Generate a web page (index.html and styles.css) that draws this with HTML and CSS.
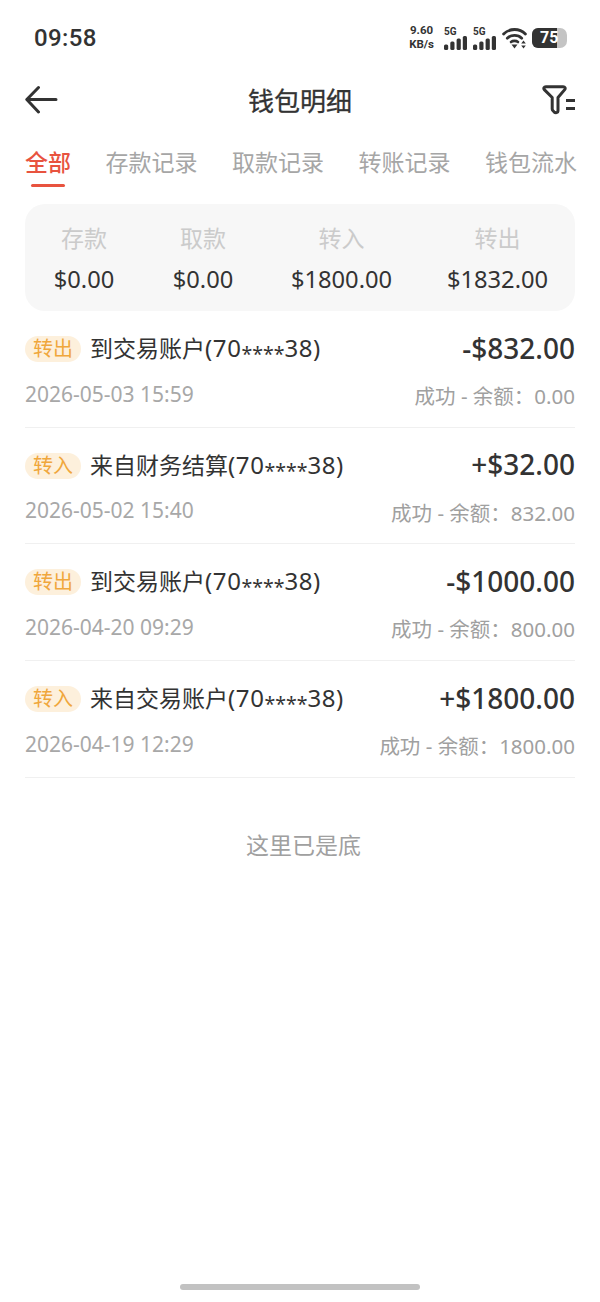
FILE: index.html
```html
<!DOCTYPE html>
<html>
<head>
  <title>钱包明细</title>
  <link rel="stylesheet" href="styles.css">
</head>
<body>
  <div class="page">
    <div class="status-bar">
      <div class="time">09:58</div>
      <div class="status-icons">
        <div class="speed"><span>9.60</span><span>KB/s</span></div>
        <div class="signal">
          <span class="signal-label">5G</span>
          <svg width="23" height="14" viewBox="0 0 23 14"><rect x="0" y="8.500" width="4.200" height="5.500" rx="1.500"/><rect x="6.300" y="5.500" width="4.200" height="8.500" rx="1.500"/><rect x="12.600" y="2.500" width="4.200" height="11.500" rx="1.500"/><rect x="18.800" y="0" width="4.200" height="14" rx="1.500"/></svg>
        </div>
        <div class="signal">
          <span class="signal-label">5G</span>
          <svg width="23" height="14" viewBox="0 0 23 14"><rect x="0" y="8.500" width="4.200" height="5.500" rx="1.500"/><rect x="6.300" y="5.500" width="4.200" height="8.500" rx="1.500"/><rect x="12.600" y="2.500" width="4.200" height="11.500" rx="1.500"/><rect x="18.800" y="0" width="4.200" height="14" rx="1.500"/></svg>
        </div>
        <svg class="wifi" width="25" height="22" viewBox="0 0 25 22">
          <path d="M1.600 7C7.500 1 17.500 1 23.400 7" fill="none" stroke="#333" stroke-width="2.800" stroke-linecap="round"/>
          <path d="M5.300 11.200C9 7.500 16 7.500 19.700 11.200" fill="none" stroke="#333" stroke-width="2.800" stroke-linecap="round"/>
          <path d="M9 15C10.800 13.500 14.200 13.500 16 15" fill="none" stroke="#333" stroke-width="2.600" stroke-linecap="round"/>
          <path d="M9.500 17.500h6l-3 4z" fill="#333"/>
          <path d="M21.500 13.500l2.300 3h-4.600zM21.500 21.500l2.300-3h-4.600z" fill="#333"/>
        </svg>
        <div class="battery"><div class="battery-fill"></div><span>75</span></div>
      </div>
    </div>

    <div class="nav">
      <svg width="33" height="30" viewBox="0 0 33 30"><path d="M31 14.500H3M13.500 2.500L1.800 14.500L13.500 27" fill="none" stroke="#333" stroke-width="3" stroke-linecap="round" stroke-linejoin="round"/></svg>
      <h1 class="nav-title">钱包明细</h1>
      <svg width="33" height="30" viewBox="0 0 33 30"><path d="M3.800 1.800H21.200C23 1.800 23.700 3.300 22.700 4.600L16 12.500V25.500C16 28 13.500 28.200 12 26.800L11 25.800C10.500 25.300 10.200 24.800 10.200 24V12.500L2.300 4.600C1.300 3.300 2 1.800 3.800 1.800Z" fill="none" stroke="#333" stroke-width="3" stroke-linejoin="round"/><rect x="24" y="14" width="9" height="3" fill="#333"/><rect x="24" y="22" width="9" height="3" fill="#333"/></svg>
    </div>

    <div class="tabs">
      <div class="tab active">全部</div>
      <div class="tab">存款记录</div>
      <div class="tab">取款记录</div>
      <div class="tab">转账记录</div>
      <div class="tab">钱包流水</div>
    </div>

    <div class="summary">
      <div class="summary-item"><div class="summary-label">存款</div><div class="summary-value">$0.00</div></div>
      <div class="summary-item"><div class="summary-label">取款</div><div class="summary-value">$0.00</div></div>
      <div class="summary-item"><div class="summary-label">转入</div><div class="summary-value">$1800.00</div></div>
      <div class="summary-item"><div class="summary-label">转出</div><div class="summary-value">$1832.00</div></div>
    </div>

    <div class="record">
      <div class="record-top">
        <div class="record-name"><span class="tag">转出</span><span>到交易账户<span class="acct">(70<span class="mask">****</span>38)</span></span></div>
        <div class="record-amount">-$832.00</div>
      </div>
      <div class="record-bottom">
        <div class="record-date">2026-05-03 15:59</div>
        <div class="record-status">成功 - 余额：0.00</div>
      </div>
    </div>
    <div class="record">
      <div class="record-top">
        <div class="record-name"><span class="tag">转入</span><span>来自财务结算<span class="acct">(70<span class="mask">****</span>38)</span></span></div>
        <div class="record-amount">+$32.00</div>
      </div>
      <div class="record-bottom">
        <div class="record-date">2026-05-02 15:40</div>
        <div class="record-status">成功 - 余额：832.00</div>
      </div>
    </div>
    <div class="record">
      <div class="record-top">
        <div class="record-name"><span class="tag">转出</span><span>到交易账户<span class="acct">(70<span class="mask">****</span>38)</span></span></div>
        <div class="record-amount">-$1000.00</div>
      </div>
      <div class="record-bottom">
        <div class="record-date">2026-04-20 09:29</div>
        <div class="record-status">成功 - 余额：800.00</div>
      </div>
    </div>
    <div class="record">
      <div class="record-top">
        <div class="record-name"><span class="tag">转入</span><span>来自交易账户<span class="acct">(70<span class="mask">****</span>38)</span></span></div>
        <div class="record-amount">+$1800.00</div>
      </div>
      <div class="record-bottom">
        <div class="record-date">2026-04-19 12:29</div>
        <div class="record-status">成功 - 余额：1800.00</div>
      </div>
    </div>

    <div class="list-end">这里已是底</div>
    <div class="home-bar"></div>
  </div>
</body>
</html>
```

FILE: styles.css
```css
* {
  box-sizing: border-box;
}

body {
  margin: 0;
  background: #fff;
  font-family: "Noto Sans", "Noto Sans CJK SC", sans-serif;
  color: #333;
}

.page {
  width: 600px;
  height: 1302px;
  display: flex;
  flex-direction: column;
  overflow: hidden;
  position: relative;
}

.status-bar {
  height: 75px;
  padding: 0 33px 0 34px;
  display: flex;
  justify-content: space-between;
  align-items: center;
}

.time {
  font-family: Roboto, sans-serif;
  font-size: 24px;
  font-weight: 500;
  letter-spacing: 0.4px;
}

.status-icons {
  display: flex;
  align-items: center;
  gap: 6px;
}

.speed {
  display: flex;
  flex-direction: column;
  align-items: center;
  margin-right: 4px;
  font-family: Roboto, sans-serif;
  font-size: 11.5px;
  font-weight: 700;
  line-height: 13.500px;
}

.signal {
  position: relative;
  width: 23px;
  height: 22px;
  display: flex;
  align-items: flex-end;
  top: 1px;
}

.signal svg {
  fill: #333;
}

.signal-label {
  position: absolute;
  left: 0;
  top: -2px;
  font-family: Roboto, sans-serif;
  font-size: 10px;
  font-weight: 700;
  line-height: 12px;
}

.battery {
  position: relative;
  width: 35px;
  height: 20px;
  margin-left: -1px;
  background: #c4c4c4;
  border-radius: 6px 7px 7px 6px;
  overflow: hidden;
}

.battery-fill {
  width: 71%;
  height: 100%;
  background: #333;
}

.battery span {
  position: absolute;
  left: 8px;
  top: 0;
  color: #fff;
  font-family: Roboto, sans-serif;
  font-size: 16px;
  font-weight: 700;
  line-height: 20px;
}

.nav {
  height: 50px;
  padding: 0 25px;
  display: flex;
  justify-content: space-between;
  align-items: center;
}

.nav-title {
  margin: 0;
  font-size: 26px;
  font-weight: 400;
  -webkit-text-stroke: 0.3px #333;
  color: #333;
}

.tabs {
  margin-top: 12px;
  padding-left: 25px;
  height: 42px;
  display: flex;
  gap: 34.5px;
  white-space: nowrap;
}

.tab {
  font-size: 23px;
  line-height: 50px;
  height: 50px;
  color: #a6a6a6;
  position: relative;
}

.tab.active {
  color: #e8533f;
  font-weight: 500;
}

.tab.active::after {
  content: "";
  position: absolute;
  left: 6px;
  right: 6px;
  top: 47px;
  height: 3px;
  background: #e8533f;
  border-radius: 2px;
}

.summary {
  margin: 25px 25px 0;
  padding-left: 28px;
  height: 107px;
  background: #f7f7f7;
  border-radius: 20px;
  display: grid;
  grid-template-columns: 62px 62px 101px 97px;
  column-gap: 57px;
  align-items: center;
  justify-items: center;
}

.summary-item {
  text-align: center;
  white-space: nowrap;
}

.summary-label {
  font-size: 23px;
  line-height: 34px;
  color: #cbcbcb;
}

.summary-value {
  margin-top: 8px;
  font-size: 23.700px;
  line-height: 32px;
}

.record {
  margin: 0 25px;
  height: 116.7px;
  border-bottom: 1px solid #f0f0f0;
  padding-top: 20px;
}

.record-top,
.record-bottom {
  display: flex;
  justify-content: space-between;
  align-items: center;
}

.record-name {
  display: flex;
  align-items: center;
  font-size: 23px;
  line-height: 36px;
  position: relative;
  top: -1px;
}

.acct {
  font-size: 24px;
  letter-spacing: 0.6px;
}

.mask {
  font-size: 19.500px;
  letter-spacing: 0;
  position: relative;
  top: 4px;
}

.tag {
  width: 56px;
  height: 26px;
  margin-right: 9px;
  background: #fdf0dc;
  color: #f0a73c;
  border-radius: 13px;
  font-size: 20px;
  line-height: 26px;
  text-align: center;
}

.record-amount {
  font-size: 28px;
  font-weight: 500;
  line-height: 30px;
  margin-bottom: 5px;
}

.record-bottom {
  margin-top: 7px;
  line-height: 30px;
}

.record-date {
  font-size: 21px;
  color: #a8a8a8;
}

.record-status {
  font-size: 20.5px;
  color: #a0a0a0;
  margin-top: 5px;
}

.list-end {
  margin-top: 50px;
  text-align: center;
  font-size: 23px;
  line-height: 34px;
  color: #a0a0a0;
  padding-left: 7px;
}

.home-bar {
  position: absolute;
  left: 180px;
  top: 1284px;
  width: 240px;
  height: 6px;
  background: #c2c2c2;
  border-radius: 3px;
}
```
